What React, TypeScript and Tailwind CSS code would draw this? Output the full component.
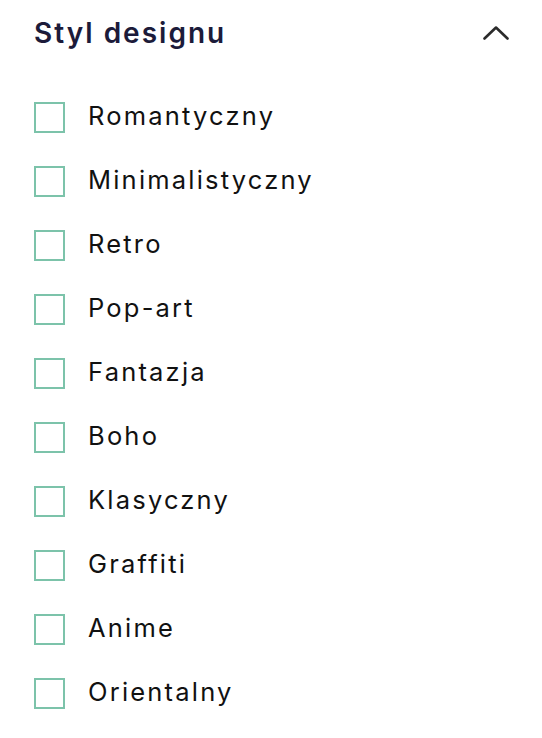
import React, { useState } from "react";

const styles = [
  "Romantyczny",
  "Minimalistyczny",
  "Retro",
  "Pop-art",
  "Fantazja",
  "Boho",
  "Klasyczny",
  "Graffiti",
  "Anime",
  "Orientalny",
];

const App: React.FC = () => {
  const [open, setOpen] = useState(true);
  const [checked, setChecked] = useState<string[]>([]);

  const toggle = (name: string) => {
    setChecked((prev) =>
      prev.includes(name) ? prev.filter((n) => n !== name) : [...prev, name]
    );
  };

  return (
    <div className="w-[542px] min-h-[738px] bg-white px-[34px] font-['Inter','Liberation_Sans',sans-serif]">
      {/* Header */}
      <button
        className="flex h-[66px] w-full items-center justify-between"
        onClick={() => setOpen(!open)}
      >
        <span className="text-[28px] font-semibold tracking-[2px] text-[#1c1b3a]">Styl designu</span>
        <svg
          width="26"
          height="14"
          viewBox="0 0 26 14"
          fill="none"
          className={`mr-[-1px] ${open ? "" : "rotate-180"}`}
        >
          <path
            d="M1.5 12.5L13 1.5L24.5 12.5"
            stroke="#2b2b2b"
            strokeWidth="2.6"
            strokeLinecap="round"
            strokeLinejoin="round"
          />
        </svg>
      </button>

      {/* Options */}
      {open && (
        <ul className="mt-[19px]">
          {styles.map((name) => (
            <li key={name}>
              <label className="flex h-[64px] cursor-pointer items-center gap-[23px]">
                <input
                  type="checkbox"
                  className="peer sr-only"
                  checked={checked.includes(name)}
                  onChange={() => toggle(name)}
                />
                <span className="h-[31px] w-[31px] shrink-0 border-2 border-[#7cc3aa] bg-white peer-checked:bg-[#7cc3aa]" />
                <span className="-mt-[1px] text-[25.5px] tracking-[2.2px] text-[#111]">{name}</span>
              </label>
            </li>
          ))}
        </ul>
      )}
    </div>
  );
};

export default App;
